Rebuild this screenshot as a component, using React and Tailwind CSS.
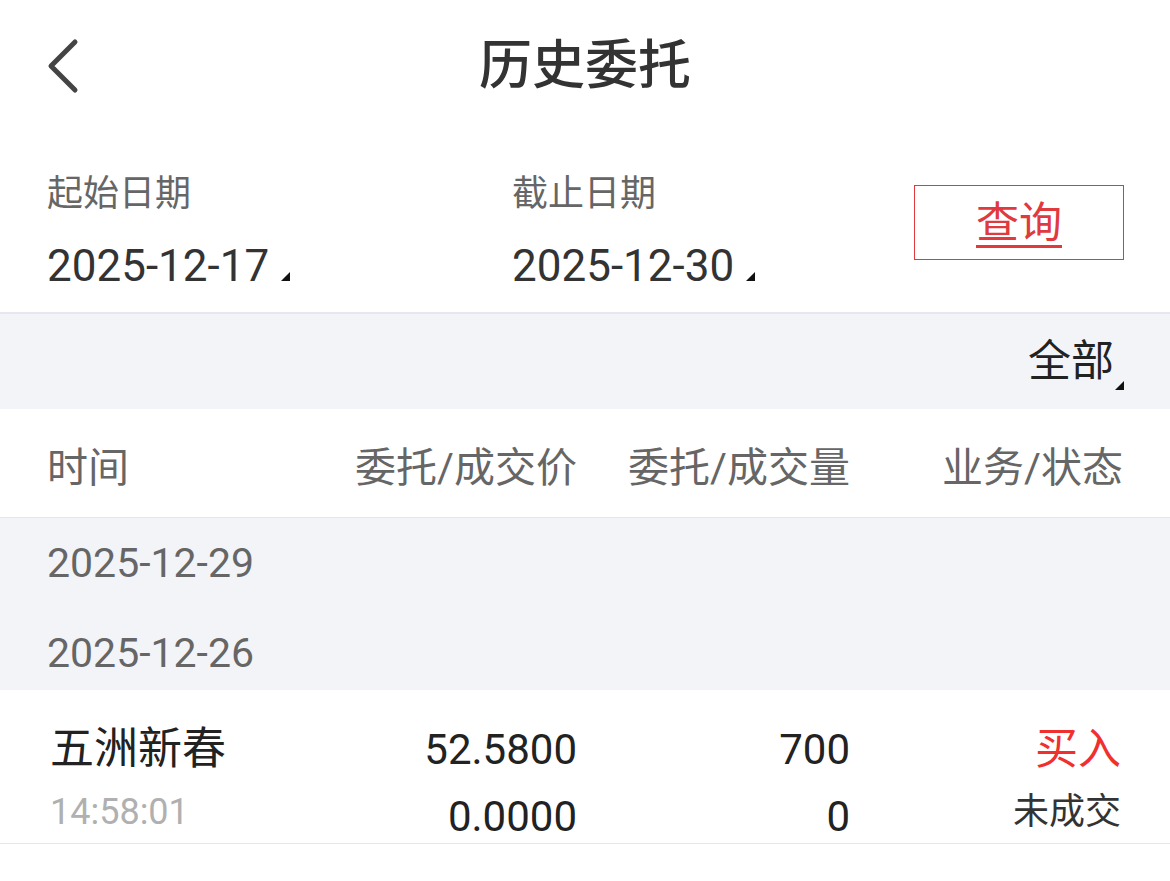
import React from "react";

function Tri({ className = "" }) {
  return (
    <svg width="9" height="9" viewBox="0 0 9 9" className={className}>
      <polygon points="9,0 9,9 0,9" fill="#111" />
    </svg>
  );
}

export default function App() {
  return (
    <div className="w-[1170px] h-[881px] overflow-hidden bg-white font-['Roboto','Noto_Sans_CJK_SC',sans-serif]">
      <header className="h-[132px] grid grid-cols-[1fr_auto_1fr] items-center px-[44px]">
        <svg width="36" height="56" viewBox="0 0 36 56" className="ml-[1px]">
          <polyline points="30,4 6,28 30,52" fill="none" stroke="#444" strokeWidth="5" strokeLinecap="round" strokeLinejoin="round" />
        </svg>
        <h1 className="text-[53px] font-medium text-[#333] leading-none">历史委托</h1>
        <div />
      </header>

      <section className="h-[182px] flex pl-[47px] pr-[46px] border-b-2 border-[#e7e7f0]">
        <div className="w-[465px] pt-[40px]">
          <div className="text-[36px] leading-[44px] text-[#666]">起始日期</div>
          <div className="mt-[26px] h-[48px] flex items-end">
            <span className="text-[44px] leading-[48px] text-[#333]">2025-12-17</span>
            <Tri className="ml-[12px] mb-[9px]" />
          </div>
        </div>
        <div className="flex-1 pt-[40px]">
          <div className="text-[36px] leading-[44px] text-[#666]">截止日期</div>
          <div className="mt-[26px] h-[48px] flex items-end">
            <span className="text-[44px] leading-[48px] text-[#333]">2025-12-30</span>
            <Tri className="ml-[12px] mb-[9px]" />
          </div>
        </div>
        <div className="mt-[53px] w-[210px] h-[75px] border border-[#e0393e] flex items-center justify-center">
          <span className="text-[43px] leading-none text-[#e0393e] underline decoration-[3px] underline-offset-[7px] pt-[2px]">查询</span>
        </div>
      </section>

      <div className="h-[95px] bg-[#f3f4f8] flex justify-end items-center pr-[46px]">
        <span className="text-[43px] leading-none text-[#222]">全部</span>
        <Tri className="self-end mb-[19px] ml-[1px]" />
      </div>

      <div className="h-[109px] border-b border-[#e5e6ec] flex items-center px-[47px] pt-[10px] text-[41px] text-[#666] leading-none">
        <div className="w-[300px]">时间</div>
        <div className="w-[230px] text-right">委托/成交价</div>
        <div className="w-[273px] text-right">委托/成交量</div>
        <div className="flex-1 text-right">业务/状态</div>
      </div>

      <div className="bg-[#f3f4f8] px-[47px] text-[41px] text-[#666]">
        <div className="h-[92px] flex items-center">2025-12-29</div>
        <div className="h-[80px] flex items-center pt-[8px]">2025-12-26</div>
      </div>

      <div className="h-[154px] border-b border-[#e5e6ec] flex px-[47px] pt-[33px]">
        <div className="w-[300px] pl-[3px]">
          <div className="h-[52px] flex items-center text-[44px] text-[#222]">五洲新春</div>
          <div className="h-[52px] mt-[11px] flex items-center text-[36px] text-[#b0b0b0]">14:58:01</div>
        </div>
        <div className="w-[230px] text-right text-[42px] text-[#222]">
          <div className="h-[52px] flex items-center justify-end">52.5800</div>
          <div className="h-[52px] mt-[11px] flex items-center justify-end pt-[8px]">0.0000</div>
        </div>
        <div className="w-[273px] text-right text-[42px] text-[#222]">
          <div className="h-[52px] flex items-center justify-end">700</div>
          <div className="h-[52px] mt-[11px] flex items-center justify-end pt-[8px]">0</div>
        </div>
        <div className="flex-1 text-right pr-[2px]">
          <div className="h-[52px] flex items-center justify-end text-[43px] text-[#f0302f]">买入</div>
          <div className="h-[52px] mt-[11px] flex items-center justify-end text-[36px] text-[#333]">未成交</div>
        </div>
      </div>
    </div>
  );
}
